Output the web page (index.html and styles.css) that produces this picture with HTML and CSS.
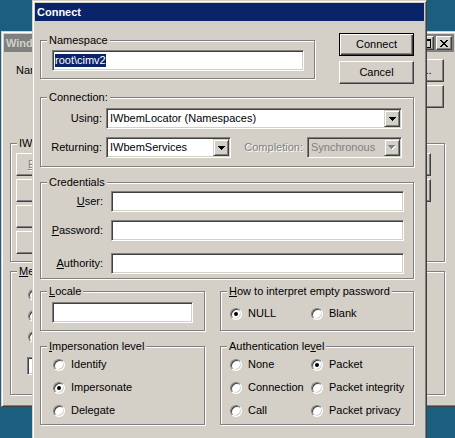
FILE: index.html
```html
<!DOCTYPE html>
<html>
<head>
<meta charset="utf-8">
<title>Connect</title>
<link rel="stylesheet" href="styles.css">
</head>
<body>
<div class="desktop">

  <div class="win bgwin">
    <div class="titlebar inactive">
      <span class="title-text">Windows Management Instrumentation Tester</span>
      <span class="tbtns">
        <span class="tbtn"><svg width="6" height="2" viewBox="0 0 6 2"><path d="M0 0h6v2h-6z"/></svg></span>
        <span class="tbtn"><svg width="9" height="9" viewBox="0 0 9 9"><path fill-rule="evenodd" d="M0 0h9v9h-9z M1 2v6h7v-6z"/></svg></span>
        <span class="tbtn close"><svg width="8" height="7" viewBox="0 0 8 7"><path d="M0 0h2v1h-2z M6 0h2v1h-2z M1 1h2v1h-2z M5 1h2v1h-2z M2 2h4v1h-4z M3 3h2v1h-2z M2 4h4v1h-4z M1 5h2v1h-2z M5 5h2v1h-2z M0 6h2v1h-2z M6 6h2v1h-2z"/></svg></span>
      </span>
    </div>
    <div class="bg-body">
      <div class="bg-top">
        <span class="bg-ns">Namespace:</span>
        <div class="btn-col bg-btns">
          <div class="btn">Connect...</div>
          <div class="btn">E<u>x</u>it</div>
        </div>
      </div>
      <div class="group bg-g1">
        <span class="legend">IWbemServices</span>
        <div class="bg-grid">
          <div class="btn dis"><span><u>E</u>num Classes...</span></div>
          <div class="btn dis"><span>Open Instance...</span></div>
          <div class="btn dis"><span>Query...</span></div>
          <div class="btn dis"><span>Create Class...</span></div>
          <div class="btn dis"><span>Create Instance...</span></div>
          <div class="btn dis"><span>Notification Query...</span></div>
          <div class="btn dis"><span>Delete Class...</span></div>
          <div class="btn dis"><span>Delete Instance...</span></div>
          <div class="empty"></div>
          <div class="btn dis"><span>Open Class...</span></div>
          <div class="btn dis"><span>Execute Method...</span></div>
          <div class="empty"></div>
        </div>
      </div>
      <div class="group bg-g2">
        <span class="legend"><u>M</u>ethod Invocation Options</span>
        <div class="bg-radios">
          <div class="ritem"><span class="radio"></span><span>Asynchronous</span></div>
          <div class="ritem"><span class="radio"></span><span>Synchronous</span></div>
          <div class="ritem"><span class="radio on"></span><span>Semisynchronous</span></div>
        </div>
        <div class="edit bg-edit"></div>
      </div>
    </div>
  </div>

  <div class="win dialog">
    <div class="titlebar active">
      <span class="title-text">Connect</span>
    </div>
    <div class="dlg-body">
      <div class="top-row">
        <div class="group ns-group">
          <span class="legend">Namespace</span>
          <div class="edit ns-edit"><span class="sel">root\cimv2</span></div>
        </div>
        <div class="btn-col">
          <div class="btn default">Connect</div>
          <div class="btn">Cancel</div>
        </div>
      </div>

      <div class="group conn-group">
        <span class="legend">Connection:</span>
        <div class="row r-using">
          <span class="lbl lbl-conn">Using:</span>
          <div class="combo c-using">
            <span class="val">IWbemLocator (Namespaces)</span>
            <span class="ddbtn"><svg width="7" height="4" viewBox="0 0 7 4"><path d="M0 0h7v1h-1v1h-1v1h-1v1h-1v-1h-1v-1h-1v-1h-1z"/></svg></span>
          </div>
        </div>
        <div class="row r-ret">
          <span class="lbl lbl-conn">Returning:</span>
          <div class="combo c-ret">
            <span class="val">IWbemServices</span>
            <span class="ddbtn"><svg width="7" height="4" viewBox="0 0 7 4"><path d="M0 0h7v1h-1v1h-1v1h-1v1h-1v-1h-1v-1h-1v-1h-1z"/></svg></span>
          </div>
          <span class="lbl lbl-comp disabled">Completion:</span>
          <div class="combo c-comp disabled">
            <span class="val">Synchronous</span>
            <span class="ddbtn"><svg width="8" height="5" viewBox="0 0 8 5"><path fill="#fff" d="M1 1h7v1h-1v1h-1v1h-1v1h-1v-1h-1v-1h-1v-1h-1z"/><path fill="#808080" d="M0 0h7v1h-1v1h-1v1h-1v1h-1v-1h-1v-1h-1v-1h-1z"/></svg></span>
          </div>
        </div>
      </div>

      <div class="group cred-group">
        <span class="legend">Credentials</span>
        <div class="row r-user">
          <span class="lbl lbl-cred"><u>U</u>ser:</span>
          <div class="edit cred-edit"></div>
        </div>
        <div class="row r-pass">
          <span class="lbl lbl-cred"><u>P</u>assword:</span>
          <div class="edit cred-edit"></div>
        </div>
        <div class="row r-auth">
          <span class="lbl lbl-cred"><u>A</u>uthority:</span>
          <div class="edit cred-edit"></div>
        </div>
      </div>

      <div class="pair-row pr1">
        <div class="group locale-group">
          <span class="legend"><u>L</u>ocale</span>
          <div class="edit locale-edit"></div>
        </div>
        <div class="group pw-group">
          <span class="legend"><u>H</u>ow to interpret empty password</span>
          <div class="radio-line pw-line">
            <div class="ritem w81"><span class="radio on"></span><span>NULL</span></div>
            <div class="ritem"><span class="radio"></span><span>Blank</span></div>
          </div>
        </div>
      </div>

      <div class="pair-row pr2">
        <div class="group imp-group">
          <span class="legend"><u>I</u>mpersonation level</span>
          <div class="rlist imp-list">
            <div class="ritem"><span class="radio"></span><span>Identify</span></div>
            <div class="ritem"><span class="radio on"></span><span>Impersonate</span></div>
            <div class="ritem"><span class="radio"></span><span>Delegate</span></div>
          </div>
        </div>
        <div class="group auth-group">
          <span class="legend">Authentication le<u>v</u>el</span>
          <div class="rgrid auth-grid">
            <div class="ritem"><span class="radio"></span><span>None</span></div>
            <div class="ritem"><span class="radio on"></span><span>Packet</span></div>
            <div class="ritem"><span class="radio"></span><span>Connection</span></div>
            <div class="ritem"><span class="radio"></span><span>Packet integrity</span></div>
            <div class="ritem"><span class="radio"></span><span>Call</span></div>
            <div class="ritem"><span class="radio"></span><span>Packet privacy</span></div>
          </div>
        </div>
      </div>
    </div>
  </div>

</div>
</body>
</html>
```

FILE: styles.css
```css
* { box-sizing: border-box; }
html, body { margin: 0; padding: 0; background: #1b5e7d; }
body {
  width: 455px;
  height: 438px;
  overflow: hidden;
  font-family: "Liberation Sans", Arial, sans-serif;
  font-size: 11px;
  line-height: 13px;
  color: #000;
}
u { text-decoration: underline; text-underline-offset: 1px; }

.desktop { position: relative; width: 455px; height: 438px; overflow: hidden; }

/* windows */
.win {
  position: absolute;
  background: #d4d0c8;
  border: 1px solid;
  border-color: #d4d0c8 #404040 #404040 #d4d0c8;
  box-shadow: inset 1px 1px #fff, inset -1px -1px #808080;
  padding: 2px;
  display: flex;
  flex-direction: column;
}
.bgwin { left: 1px; top: 31px; width: 456px; height: 376px; }
.dialog { left: 32px; top: 0; width: 395px; height: 470px; }

.titlebar {
  flex: none;
  height: 18px;
  display: flex;
  align-items: center;
  justify-content: space-between;
  font-weight: bold;
  padding: 0 2px 0 2px;
  white-space: nowrap;
  overflow: hidden;
}
.titlebar.active { background: #0a246a; color: #fff; }
.titlebar.inactive { background: #808080; color: #d4d0c8; }
.tbtns { display: flex; align-items: center; }
.tbtn {
  width: 16px;
  height: 14px;
  background: #d4d0c8;
  border: 1px solid;
  border-color: #fff #404040 #404040 #fff;
  box-shadow: inset -1px -1px #808080;
  display: flex;
  align-items: center;
  justify-content: center;
}
.tbtn svg { display: block; }
.tbtn.close { margin-left: 2px; }

/* generic controls */
.group {
  border: 1px solid #808080;
  box-shadow: inset 1px 1px #fff, 1px 1px #fff;
}
.legend {
  display: block;
  width: max-content;
  height: 13px;
  margin: -7px 0 0 6px;
  padding: 0 2px;
  background: #d4d0c8;
  white-space: nowrap;
}
.edit {
  height: 21px;
  background: #fff;
  border: 1px solid;
  border-color: #808080 #fff #fff #808080;
  box-shadow: inset 1px 1px #404040, inset -1px -1px #d4d0c8;
  padding: 0 2px;
  display: flex;
  align-items: center;
}
.btn {
  width: 75px;
  height: 23px;
  flex: none;
  display: flex;
  align-items: center;
  justify-content: center;
  border: 1px solid;
  border-color: #fff #404040 #404040 #fff;
  box-shadow: inset -1px -1px #808080;
  white-space: nowrap;
  overflow: hidden;
}
.btn.default {
  border-color: #000;
  box-shadow: inset 1px 1px #fff, inset -1px -1px #404040, inset -2px -2px #808080;
}
.btn.dis { color: #808080; text-shadow: 1px 1px #fff; width: auto; }
.btn-col { display: flex; flex-direction: column; gap: 5px; }

.combo {
  height: 21px;
  flex: none;
  background: #fff;
  border: 1px solid;
  border-color: #808080 #fff #fff #808080;
  box-shadow: inset 1px 1px #404040, inset -1px -1px #d4d0c8;
  padding: 1px;
  display: flex;
  align-items: center;
}
.combo .val { flex: 1; padding-left: 2px; white-space: nowrap; overflow: hidden; }
.ddbtn {
  flex: none;
  width: 16px;
  height: 17px;
  background: #d4d0c8;
  border: 1px solid;
  border-color: #d4d0c8 #404040 #404040 #d4d0c8;
  box-shadow: inset 1px 1px #fff, inset -1px -1px #808080;
  display: flex;
  align-items: center;
  justify-content: center;
}
.ddbtn svg { display: block; }
.combo.disabled { background: #d4d0c8; }
.combo.disabled .val { color: #808080; }
.lbl.disabled { color: #808080; text-shadow: 1px 1px #fff; }

.radio {
  flex: none;
  width: 12px;
  height: 12px;
  border-radius: 50%;
  background: #fff;
  border: 1px solid;
  border-color: #808080 #fff #fff #808080;
  box-shadow: inset 1px 1px #404040, inset -1px -1px #d4d0c8;
  display: flex;
  align-items: center;
  justify-content: center;
}
.radio.on::after {
  content: "";
  width: 4px;
  height: 4px;
  border-radius: 50%;
  background: #000;
}
.ritem { display: flex; align-items: center; gap: 6px; white-space: nowrap; }
.w81 { width: 81px; flex: none; }

/* background window */
.bg-body { padding: 7px 9px 0 6px; }
.bg-top { display: flex; align-items: flex-start; }
.bg-ns { margin-left: 6px; line-height: 23px; }
.bg-btns { margin-left: auto; margin-right: 1px; gap: 3px; }
.bg-g1 { margin-top: 35px; height: 119px; }
.bg-grid {
  margin: 3px 0 0 5px;
  width: 415px;
  display: grid;
  grid-template-columns: repeat(3, 104px);
  grid-auto-rows: 23px;
  row-gap: 3px;
  justify-content: space-between;
}
.bg-g2 { margin-top: 9px; height: 124px; }
.bg-radios { margin: 6px 0 0 17px; display: flex; flex-direction: column; }
.bg-radios .ritem { height: 21px; }
.bg-edit { margin: 10px 0 0 16px; width: 150px; height: 18px; }

/* dialog */
.dlg-body { padding: 12px 10px 0 5px; }
.top-row { display: flex; justify-content: space-between; align-items: flex-start; }
.ns-group { width: 275px; height: 39px; margin-top: 7px; }
.ns-edit { width: 252px; margin: 3px 0 0 11px; }
.sel { background: #0a246a; color: #fff; line-height: 13px; padding: 0; }

.row { display: flex; align-items: center; height: 21px; }
.lbl { flex: none; text-align: right; white-space: nowrap; }

.conn-group { margin-top: 13px; height: 70px; }
.lbl-conn { width: 61px; }
.c-using { width: 296px; margin-left: 4px; }
.r-using { margin-top: 4px; }
.r-ret { margin-top: 8px; }
.c-ret { width: 125px; margin-left: 4px; }
.lbl-comp { width: 72px; }
.c-comp { width: 95px; margin-left: 4px; }

.cred-group { margin-top: 15px; height: 97px; }
.lbl-cred { width: 62px; }
.cred-edit { width: 293px; margin-left: 8px; }
.r-user { margin-top: 2px; }
.r-pass { margin-top: 8px; }
.r-auth { margin-top: 12px; }

.pair-row { display: flex; justify-content: space-between; align-items: flex-start; }
.pr1 { margin-top: 12px; }
.pr2 { margin-top: 15px; }
.locale-group { width: 165px; height: 40px; }
.locale-edit { width: 141px; margin: 4px 0 0 11px; }
.pw-group { width: 194px; height: 40px; }
.pw-line { display: flex; margin: 4px 0 0 9px; height: 23px; align-items: center; }

.imp-group { width: 165px; height: 79px; }
.auth-group { width: 194px; height: 79px; }
.rlist { display: flex; flex-direction: column; }
.rlist .ritem { height: 23px; }
.imp-list { margin-left: 12px; }
.rgrid { display: grid; grid-template-columns: 81px auto; grid-auto-rows: 23px; margin-left: 9px; }
```
